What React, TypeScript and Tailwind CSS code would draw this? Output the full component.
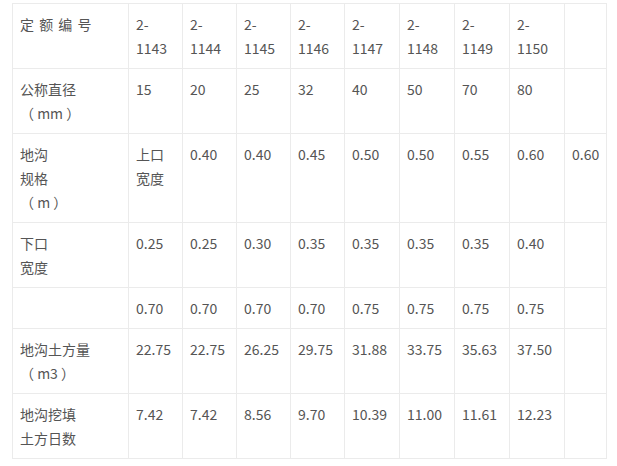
const cols = ['w-[116px]', 'w-[54px]', 'w-[54px]', 'w-[54px]', 'w-[54px]', 'w-[55px]', 'w-[55px]', 'w-[55px]', 'w-[55px]', 'w-[41px]']

const rows: string[][][] = [
  [['定 额 编 号'], ['2-', '1143'], ['2-', '1144'], ['2-', '1145'], ['2-', '1146'], ['2-', '1147'], ['2-', '1148'], ['2-', '1149'], ['2-', '1150'], []],
  [['公称直径', '（ mm ）'], ['15'], ['20'], ['25'], ['32'], ['40'], ['50'], ['70'], ['80'], []],
  [['地沟', '规格', '（ m ）'], ['上口', '宽度'], ['0.40'], ['0.40'], ['0.45'], ['0.50'], ['0.50'], ['0.55'], ['0.60'], ['0.60']],
  [['下口', '宽度'], ['0.25'], ['0.25'], ['0.30'], ['0.35'], ['0.35'], ['0.35'], ['0.35'], ['0.40'], []],
  [[], ['0.70'], ['0.70'], ['0.70'], ['0.70'], ['0.75'], ['0.75'], ['0.75'], ['0.75'], []],
  [['地沟土方量', '（ m3 ）'], ['22.75'], ['22.75'], ['26.25'], ['29.75'], ['31.88'], ['33.75'], ['35.63'], ['37.50'], []],
  [['地沟挖填', '土方日数'], ['7.42'], ['7.42'], ['8.56'], ['9.70'], ['10.39'], ['11.00'], ['11.61'], ['12.23'], []],
]

export default function App() {
  return (
    <div className="w-[617px] h-[466px] bg-white pl-[12px] pt-[3px]">
      <table className="table-fixed border-collapse text-[14px] leading-[24px] text-[#555] font-['Microsoft_YaHei','Noto_Sans_CJK_SC',sans-serif]">
        <colgroup>
          {cols.map((w, i) => (
            <col key={i} className={w} />
          ))}
        </colgroup>
        <tbody>
          {rows.map((row, r) => (
            <tr key={r}>
              {row.map((cell, c) => (
                <td
                  key={c}
                  className={
                    r === 0 && c === 0
                      ? 'border border-[#ebebeb] px-[7px] py-[8px] align-top whitespace-nowrap tracking-[1px]'
                      : 'border border-[#ebebeb] px-[7px] py-[8px] align-top whitespace-nowrap'
                  }
                >
                  {cell.map((line, k) => (
                    <div key={k}>{line}</div>
                  ))}
                </td>
              ))}
            </tr>
          ))}
        </tbody>
      </table>
    </div>
  )
}
